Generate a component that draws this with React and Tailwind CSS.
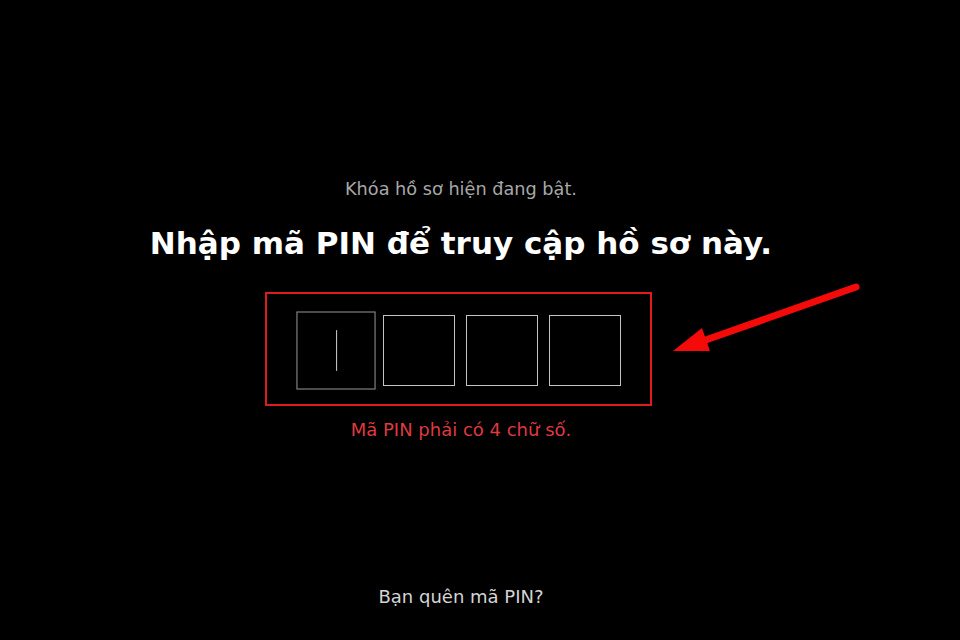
import React from "react";

export default function App() {
  return (
    <div
      className="relative w-full h-[640px] bg-black overflow-hidden"
      style={{ fontFamily: '"DejaVu Sans", "Noto Sans", sans-serif' }}
    >
      <div className="w-[922px] h-full flex flex-col items-center">
        <p className="pt-[179px] text-[17.7px] leading-[21px] text-[#a8a8a8]">
          Khóa hồ sơ hiện đang bật.
        </p>
        <h1 className="mt-[24px] text-[31px] leading-[38px] font-bold text-white">
          Nhập mã PIN để truy cập hồ sơ này.
        </h1>
        <div className="mt-[30px] mr-[5px] w-[387px] h-[114px] border-2 border-[#e01b1b] pl-[33px] pr-[27px] pt-[21px] pb-[18px] flex items-start gap-[11px]">
          <div className="w-[72px] h-[71px] border border-[#8a8a8a] scale-110 flex items-center justify-center">
            <div className="w-px h-[37px] bg-[#bdbdbd]" />
          </div>
          <div className="w-[72px] h-[71px] border border-[#c4c4c4]" />
          <div className="w-[72px] h-[71px] border border-[#c4c4c4]" />
          <div className="w-[72px] h-[71px] border border-[#c4c4c4]" />
        </div>
        <p className="mt-[13px] text-[18px] leading-[22px] text-[#df3a3f]">
          Mã PIN phải có 4 chữ số.
        </p>
        <p className="mt-auto pb-[32px] text-[18px] leading-[22px] text-[#d4d4d4]">
          Bạn quên mã PIN?
        </p>
      </div>
      <svg
        className="absolute left-0 top-0 pointer-events-none"
        width="960"
        height="640"
        viewBox="0 0 960 640"
      >
        <line
          x1="856"
          y1="287"
          x2="700"
          y2="342"
          stroke="#f50a0a"
          strokeWidth="7"
          strokeLinecap="round"
        />
        <polygon points="673,351 702,328 710,351" fill="#f50a0a" />
      </svg>
    </div>
  );
}
